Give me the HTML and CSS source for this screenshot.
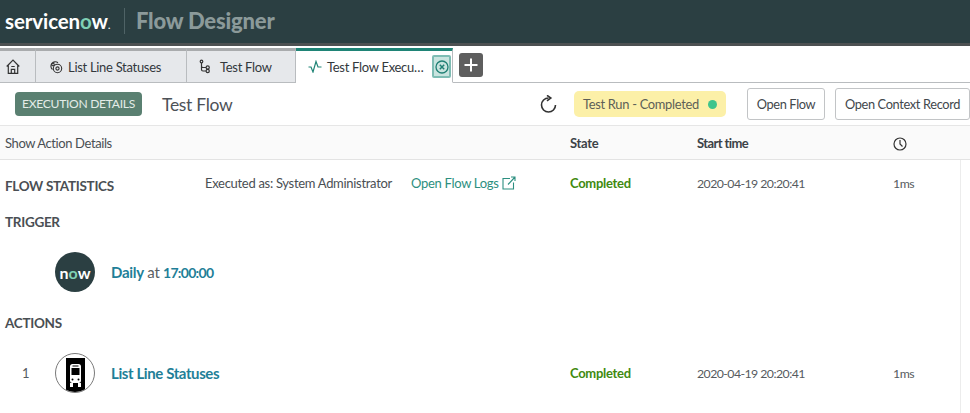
FILE: index.html
```html
<!DOCTYPE html>
<html lang="en">
  <head>
    <meta charset="UTF-8" />
    <title>Flow Designer</title>
    <link rel="stylesheet" href="styles.css">
  </head>
  <body>
    <header class="brand-bar">
      <span class="logo">servicen<span class="logo-o">o</span>w<span class="logo-dot">.</span></span>
      <span class="brand-sep"></span>
      <span class="app-name">Flow Designer</span>
    </header>

    <nav class="tabs">
      <div class="tab tab-home">
        <svg width="14" height="15" viewBox="0 0 14 15" fill="none" stroke="#333" stroke-width="1.2"><path d="M0.700 7.500 7 1.200l6.300 6.300M2.300 6.500v7.800h9.400V6.500M5.300 14.300v-4h3.400v4M5.300 7.500h3.400"/></svg>
      </div>
      <div class="tab tab-subflow">
        <svg width="15" height="15" viewBox="0 0 15 15" fill="none" stroke="#333" stroke-width="1.1"><circle cx="9.500" cy="9.500" r="4.200"/><circle cx="9.500" cy="9.500" r="1.600"/><path d="M4.500 10.500A4.300 4.300 0 1 1 10 3.800"/><circle cx="5" cy="5.500" r="1.300"/></svg>
        <span>List Line Statuses</span>
      </div>
      <div class="tab tab-flow">
        <svg width="12" height="15" viewBox="0 0 12 15" fill="none" stroke="#333" stroke-width="1.2"><circle cx="2.500" cy="2.500" r="1.300"/><path d="M2.500 4v6.500q0 1.500 1.500 1.500h3M2.500 7q0 1.500 1.500 1.500h3"/><circle cx="8.700" cy="8.500" r="1.600"/><circle cx="8.700" cy="12" r="1.600"/></svg>
        <span>Test Flow</span>
      </div>
      <div class="tab tab-active">
        <svg width="14" height="13" viewBox="0 0 14 13" fill="none" stroke="#1f8476" stroke-width="1.2"><path d="M0.500 7h2.500l2 5 3-10.500 2 5.500h3.500"/></svg>
        <span class="tab-title">Test Flow Execu…</span>
        <span class="tab-close">
          <svg width="14" height="14" viewBox="0 0 14 14" fill="none" stroke="#1f7f74" stroke-width="1.3"><circle cx="7" cy="7" r="6"/><path d="M4.800 4.800l4.400 4.400M9.200 4.800l-4.400 4.400" stroke-width="1.500"/></svg>
        </span>
      </div>
      <button class="tab-add">
        <svg width="14" height="14" viewBox="0 0 14 14" stroke="#fff" stroke-width="2"><path d="M7 0.500v13M0.500 7h13"/></svg>
      </button>
    </nav>

    <section class="toolbar">
      <span class="exec-tag">EXECUTION DETAILS</span>
      <h1 class="flow-name">Test Flow</h1>
      <svg class="refresh" width="17" height="18" viewBox="0 0 17 18" fill="none" stroke="#333" stroke-width="1.600"><path d="M15.500 10A7 7 0 1 1 8.500 3"/><path d="M7 0.300 10.800 3 7 5.800"/></svg>
      <span class="run-status">Test Run - Completed<i class="status-dot"></i></span>
      <button class="btn btn-flow">Open Flow</button>
      <button class="btn btn-context">Open Context Record</button>
    </section>

    <section class="table-head row">
      <span class="show-details">Show Action Details</span>
      <b class="col-state">State</b>
      <b class="col-start">Start time</b>
      <span class="col-dur">
        <svg width="14" height="14" viewBox="0 0 14 14" fill="none" stroke="#333" stroke-width="1.200"><circle cx="7" cy="7" r="6"/><path d="M7 3v4l2.500 2.500"/></svg>
      </span>
    </section>

    <main class="details">
      <div class="row stats-row">
        <h2 class="section-title">FLOW STATISTICS</h2>
        <span class="executed">Executed as: System Administrator</span>
        <a class="logs-link">Open Flow Logs
          <svg width="14" height="14" viewBox="0 0 14 14" fill="none" stroke="#2c8f80" stroke-width="1.100"><path d="M8 2.500H1v10.500h10.500V6.500M6 8.500 13 1M9 1h4v4"/></svg>
        </a>
        <span class="col-state done">Completed</span>
        <span class="col-start">2020-04-19 20:20:41</span>
        <span class="col-ms">1ms</span>
      </div>

      <h2 class="section-title trigger-title">TRIGGER</h2>
      <div class="trigger-row">
        <span class="now-badge">n<span class="now-o">o</span>w</span>
        <span class="step-text"><a>Daily</a> at <a class="step-time">17:00:00</a></span>
      </div>

      <h2 class="section-title actions-title">ACTIONS</h2>
      <div class="row action-row">
        <span class="step-num">1</span>
        <span class="bus-icon">
          <svg width="19" height="36" viewBox="0 0 19 36"><rect width="19" height="36" fill="#000"/><rect x="4" y="6" width="11" height="19" rx="2.500" fill="#fff"/><rect x="5.500" y="10" width="8" height="7" fill="#000"/><rect x="6.500" y="7.500" width="6" height="1" fill="#000"/><rect x="4" y="25" width="3" height="4" fill="#fff"/><rect x="12" y="25" width="3" height="4" fill="#fff"/><circle cx="6.500" cy="21.500" r="1" fill="#000"/><circle cx="12.500" cy="21.500" r="1" fill="#000"/></svg>
        </span>
        <a class="step-link">List Line Statuses</a>
        <span class="col-state done">Completed</span>
        <span class="col-start">2020-04-19 20:20:41</span>
        <span class="col-ms">1ms</span>
      </div>
    </main>
  </body>
</html>
```

FILE: styles.css
```css
* {
  box-sizing: border-box;
}
html,
body {
  height: 413px;
  overflow: hidden;
}
body {
  margin: 0;
  font-family: "Lato", "Noto Sans", sans-serif;
  font-size: 13px;
  letter-spacing: -0.3px;
  color: #4a4f54;
  background: #fff;
}
h1,
h2 {
  margin: 0;
  font-weight: normal;
}
.brand-bar {
  height: 46px;
  background: #2b3f42;
  border-bottom: 3px solid #4d5152;
  display: flex;
  align-items: center;
  padding: 0 0 2px 5px;
}
.logo {
  width: 109px;
  color: #fff;
  font-size: 20.500px;
  font-weight: 700;
  letter-spacing: -0.1px;
}
.logo-o {
  color: #7fd0b4;
}
.logo-dot {
  font-size: 10px;
}
.brand-sep {
  width: 1px;
  height: 26px;
  margin: 0 11px 0 10px;
  background: #4f6366;
}
.app-name {
  color: #8b9a9a;
  font-size: 22px;
  font-weight: 900;
  letter-spacing: -0.2px;
}
.tabs {
  height: 37px;
  padding-top: 2px;
  display: flex;
  align-items: flex-start;
  border-bottom: 1px solid #b9bcbf;
}
.tab {
  height: 35px;
  flex: none;
  display: flex;
  align-items: center;
  background: #e6e8eb;
  border: 1px solid #b9bcbf;
  border-top: 3px solid #a9abad;
  border-left: 0;
  color: #33383d;
  font-size: 13px;
}
.tab svg {
  flex: none;
}
.tab-home {
  width: 36px;
  justify-content: center;
  padding-right: 9px;
}
.tab-subflow {
  width: 151px;
  padding-left: 12px;
  gap: 5px;
}
.tab-flow {
  width: 109px;
  padding-left: 12px;
  gap: 9px;
}
.tab-active {
  width: 157px;
  padding: 0 1px 0 12px;
  background: #fff;
  border-top-color: #1f8476;
  border-bottom-color: #fff;
  gap: 5px;
}
.tab-title {
  white-space: nowrap;
}
.tab-close {
  width: 19px;
  height: 23px;
  flex: none;
  display: flex;
  align-items: center;
  justify-content: center;
  margin-left: auto;
  background: #c9e4df;
  border: 2px solid #7ebdb4;
  border-radius: 2px;
}
.tab-add {
  width: 24px;
  height: 24px;
  margin: 5px 0 0 6px;
  padding: 0;
  border: none;
  border-radius: 3px;
  background: #5e5e5e;
  display: flex;
  align-items: center;
  justify-content: center;
}
.toolbar {
  height: 43px;
  display: flex;
  align-items: center;
  padding-left: 15px;
  border-bottom: 1px solid #e6e6e6;
}
.exec-tag {
  width: 127px;
  height: 24px;
  line-height: 24px;
  text-align: center;
  background: #5a8071;
  color: #e4ece8;
  border-radius: 4px;
  font-size: 12.100px;
}
.flow-name {
  margin-left: 20px;
  font-size: 17.500px;
  color: #4d5257;
}
.refresh {
  margin-left: auto;
  flex: none;
}
.run-status {
  width: 152px;
  height: 26px;
  flex: none;
  margin-left: 17px;
  padding-left: 9px;
  display: flex;
  align-items: center;
  white-space: nowrap;
  background: #fcf0a8;
  border-radius: 5px;
  color: #5d5f57;
  font-size: 12.900px;
}
.status-dot {
  width: 9px;
  height: 9px;
  margin-left: auto;
  margin-right: 9px;
  border-radius: 50%;
  background: #3fc48c;
}
.btn {
  height: 32px;
  flex: none;
  padding: 0;
  background: #fff;
  border: 1px solid #c2c4c6;
  border-radius: 3px;
  color: #42474c;
  font-family: inherit;
  font-size: 12.800px;
  letter-spacing: -0.35px;
}
.btn-flow {
  width: 78px;
  margin: 0 10px 0 21px;
}
.btn-context {
  width: 135px;
}
.row {
  display: grid;
  align-items: center;
}
.table-head {
  height: 34px;
  background: #fafafa;
  border-bottom: 1px solid #e3e3e3;
  padding-left: 5px;
  grid-template-columns: 565px 127px 196px 1fr;
}
.table-head b {
  color: #3c4247;
  font-weight: 700;
}
.table-head .col-start {
  letter-spacing: -0.6px;
}
.show-details {
  letter-spacing: -0.4px;
}
.col-dur {
  display: flex;
  align-items: center;
  padding-top: 3px;
}
.details {
  height: 253px;
  margin-right: 9px;
  padding-left: 5px;
  border-right: 1px solid #ececec;
}
.stats-row {
  height: 46px;
  grid-template-columns: 200px 206px 159px 127px 196px 1fr;
}
.section-title {
  font-size: 13.500px;
  font-weight: 700;
  color: #4a4f54;
}
.stats-row .section-title {
  padding-top: 6px;
}
.logs-link {
  display: flex;
  align-items: center;
  color: #2c8f80;
}
.logs-link svg {
  margin-left: 3px;
}
.done {
  color: #3f8a10;
  font-weight: 700;
}
.col-start,
.col-ms {
  color: #565b60;
}
.stats-row .col-start,
.action-row .col-start {
  font-size: 12.300px;
  letter-spacing: -0.55px;
}
.col-ms {
  font-size: 12.300px;
  letter-spacing: -0.5px;
}
.trigger-title {
  height: 20px;
  line-height: 20px;
  margin-top: 6px;
}
.trigger-row {
  height: 40px;
  margin: 20px 0 0 50px;
  display: flex;
  align-items: center;
  gap: 16px;
  font-size: 15px;
}
.now-badge {
  width: 40px;
  height: 40px;
  border-radius: 50%;
  background: #2b3f42;
  color: #fff;
  font-size: 16px;
  font-weight: 700;
  letter-spacing: 0;
  display: flex;
  align-items: center;
  justify-content: center;
}
.now-o {
  color: #7fd0b4;
}
.step-text a,
.step-link {
  color: #1f7f98;
  font-weight: 700;
}
.step-text .step-time {
  font-size: 14px;
  letter-spacing: -0.7px;
}
.step-text {
  color: #5a5f64;
}
.actions-title {
  height: 20px;
  line-height: 20px;
  margin-top: 21px;
}
.action-row {
  height: 40px;
  margin-top: 20px;
  grid-template-columns: 50px 56px 459px 127px 196px 1fr;
}
.step-num {
  padding: 0 0 1px 17px;
  color: #565b60;
}
.bus-icon {
  width: 40px;
  height: 40px;
  display: flex;
  align-items: flex-start;
  justify-content: center;
  padding-top: 4px;
  border: 1px solid #7a7a7a;
  border-radius: 50%;
  overflow: hidden;
}
.step-link {
  font-size: 15px;
  letter-spacing: -0.4px;
}
```
